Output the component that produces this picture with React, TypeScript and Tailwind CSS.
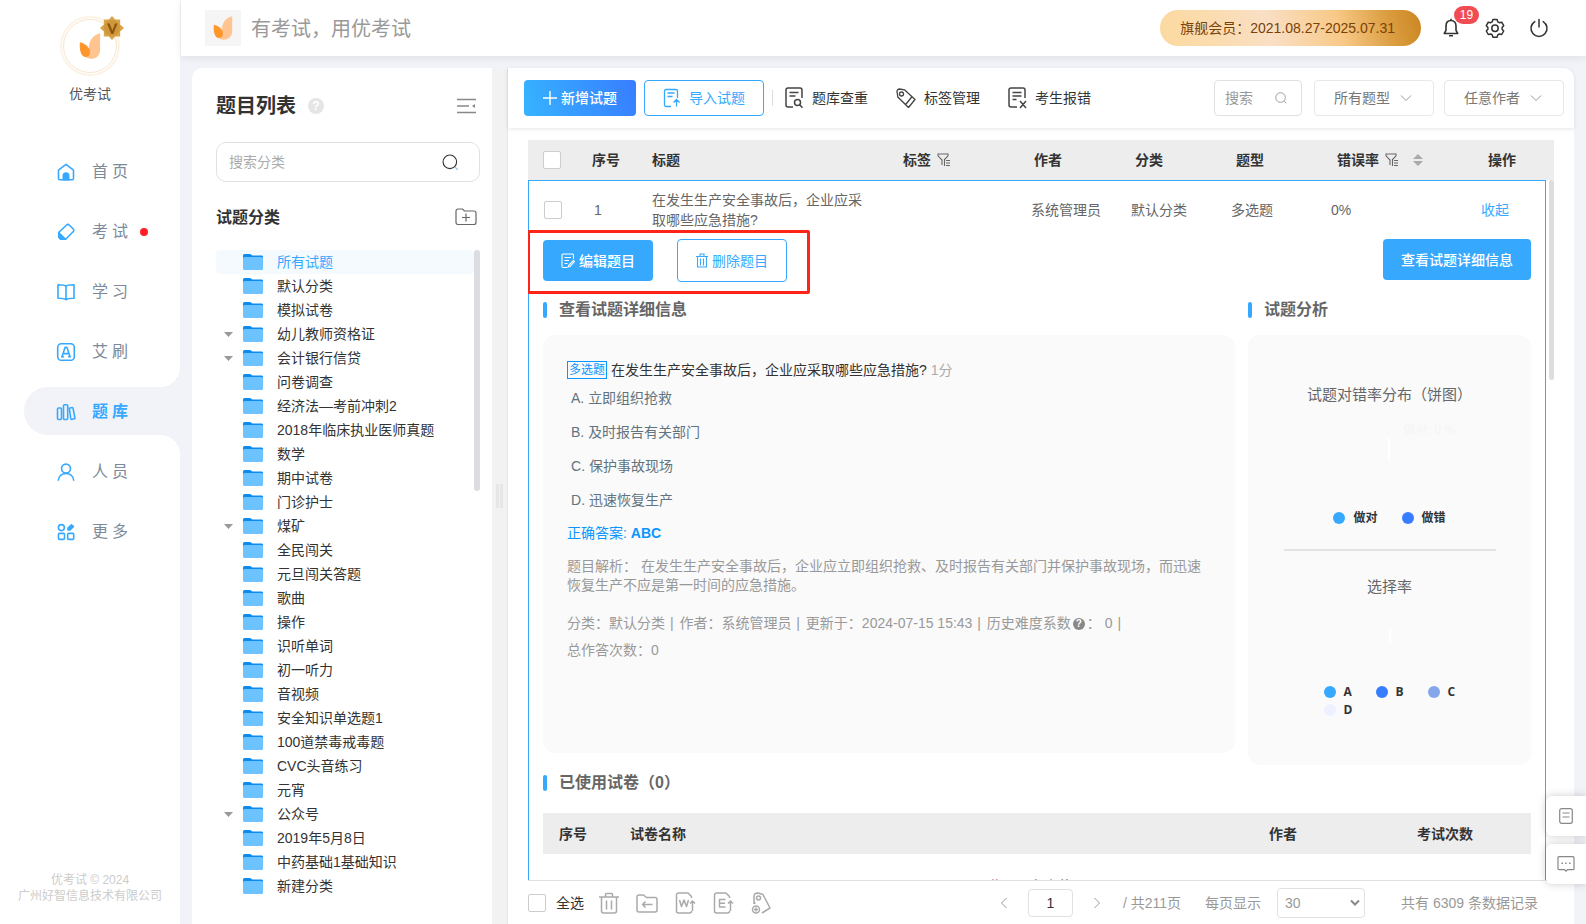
import React from "react";
import clsx from "clsx";

// Sidebar
const menu = [
  { name: "首页", icon: "home" },
  { name: "考试", icon: "exam", dot: true },
  { name: "学习", icon: "book" },
  { name: "艾刷", icon: "letter" },
  { name: "题库", icon: "bank", active: true },
  { name: "人员", icon: "user" },
  { name: "更多", icon: "more" },
];

// Categories of the tree
const categories = [
  { name: "所有试题", active: true },
  { name: "默认分类" },
  { name: "模拟试卷" },
  { name: "幼儿教师资格证", open: true },
  { name: "会计银行信贷", open: true },
  { name: "问卷调查" },
  { name: "经济法—考前冲刺2" },
  { name: "2018年临床执业医师真题" },
  { name: "数学" },
  { name: "期中试卷" },
  { name: "门诊护士" },
  { name: "煤矿", open: true },
  { name: "全民闯关" },
  { name: "元旦闯关答题" },
  { name: "歌曲" },
  { name: "操作" },
  { name: "识听单词" },
  { name: "初一听力" },
  { name: "音视频" },
  { name: "安全知识单选题1" },
  { name: "100道禁毒戒毒题" },
  { name: "CVC头音练习" },
  { name: "元宵" },
  { name: "公众号", open: true },
  { name: "2019年5月8日" },
  { name: "中药基础1基础知识" },
  { name: "新建分类" },
];

const options = [
  { key: "A", text: "立即组织抢救" },
  { key: "B", text: "及时报告有关部门" },
  { key: "C", text: "保护事故现场" },
  { key: "D", text: "迅速恢复生产" },
];

const choices = [
  { name: "A", color: "bg-[#36a9ff]" },
  { name: "B", color: "bg-[#387dff]" },
  { name: "C", color: "bg-[#85a7ea]" },
  { name: "D", color: "bg-[#edf1ff]" },
];

const MenuIcon = ({ name }: { name: string }) => (
  <svg
    className="size-5 shrink-0"
    viewBox="0 0 20 20"
    fill="none"
    stroke="#36a9ff"
    strokeWidth="1.6"
    strokeLinejoin="round"
  >
    {name === "home" && (
      <>
        <path d="M2.5 8.2 10 2.3l7.5 5.9v8.3a1.2 1.2 0 0 1-1.2 1.2H3.7a1.2 1.2 0 0 1-1.2-1.2z" />
        <path d="M7.3 17.7v-4a2.7 2.7 0 0 1 5.4 0v4z" fill="#36a9ff" />
      </>
    )}
    {name === "exam" && (
      <>
        <path d="m3 10.3 7.3-7.1a2.2 2.2 0 0 1 3.1 0l3.7 3.6a2 2 0 0 1 0 3L9.6 17.2H4.6L3 15.2z" />
        <path d="M2.7 10.6 9.5 17.2H4.800L2.700 15z" fill="#36a9ff" />
      </>
    )}
    {name === "book" && (
      <path d="M10 4.200c-1.200-1.400-3.600-1.400-8-1.400v13.400c4.400 0 6.800 0 8 1.500 1.200-1.500 3.600-1.500 8-1.500V2.800c-4.400 0-6.800 0-8 1.400zm0 0v13.400" />
    )}
    {name === "letter" && (
      <>
        <rect x="1.700" y="1.700" width="16.600" height="16.600" rx="3.600" />
        <path d="m6 14.800 3-9.400h2l3 9.400M7 11.600h6M5 14.800h3M12 14.800h3" />
      </>
    )}
    {name === "bank" && (
      <>
        <rect x="1.500" y="6" width="4" height="11.500" rx="1" />
        <rect x="7.500" y="2.800" width="4.200" height="14.700" rx="1" />
        <path d="m13.300 6.200 2.700-.7a.8.800 0 0 1 1 .6l2 10.400-3.300.900c-.5.100-.800-.100-.900-.500z" />
      </>
    )}
    {name === "user" && (
      <>
        <circle cx="10" cy="6.600" r="4.500" />
        <path d="M2.200 18.800c.4-4.600 3.600-7.300 7.800-7.300s7.400 2.700 7.800 7.300" />
      </>
    )}
    {name === "more" && (
      <>
        <circle cx="5.400" cy="5.600" r="3" />
        <rect x="2.500" y="11.400" width="6" height="6" rx="1" />
        <rect x="11.700" y="11.400" width="6" height="6" rx="1" />
        <path d="m12 6 3.400-3.200 2 1.900L14 7.900h-2z" fill="#36a9ff" />
      </>
    )}
  </svg>
);

const Logo = ({ className }: { className: string }) => (
  <svg className={className} viewBox="0 0 24 28">
    <path
      d="M23 0C15 2 11 8 11 15c0 5-3 8-5 10 2 2 4 3 7 3 6 0 10-4 10-10z"
      fill="#ffc48f"
    />
    <path d="M1 10c5 1 11 5 11 11 0 3-2 5-5 5C3 26 0 20 1 10z" fill="#ff962b" />
  </svg>
);

const Folder = () => (
  <svg className="h-4 w-5 shrink-0" viewBox="0 0 20 16">
    <path
      d="M0 1.500A1.500 1.500 0 0 1 1.500 0h5.300c1.300 0 1.700 1.500 3 1.500h9A1.200 1.200 0 0 1 20 2.700V8H0z"
      fill="#0b8cf2"
    />
    <path
      d="M0 4.200 1 3h18l1 1v10.500a1.500 1.500 0 0 1-1.500 1.500h-17A1.500 1.500 0 0 1 0 14.500z"
      fill="#6cc3ff"
    />
  </svg>
);

const Search = ({ className, handle }: { className: string; handle?: string }) => (
  <svg className={className} viewBox="0 0 18 18" fill="none" strokeWidth="1.200">
    <circle cx="8.300" cy="8.300" r="7.200" stroke="currentColor" />
    <path d="m13.800 13.800 3 3" stroke={handle || "currentColor"} />
  </svg>
);

const Chevron = ({ className }: { className: string }) => (
  <svg
    className={className}
    viewBox="0 0 12 12"
    fill="none"
    stroke="currentColor"
    strokeWidth="1"
  >
    <path d="m1 3.500 5 5 5-5" />
  </svg>
);

const Filter = () => (
  <svg
    className="size-[14px]"
    viewBox="0 0 14 14"
    fill="none"
    stroke="#666"
    strokeWidth="1.100"
  >
    <path d="M5 12V7L1 2.800V1h10v1.800L7.500 6.500V13M9 7.500h4M9 10h4M9 12.500h4" />
  </svg>
);

const Check = ({ label }: { label: string }) => (
  <input
    type="checkbox"
    aria-label={label}
    className="block size-[18px] shrink-0 appearance-none rounded-[2px] border border-[#ccc] bg-white"
  />
);

const SectionTitle = ({
  children,
  className,
}: {
  children: React.ReactNode;
  className: string;
}) => (
  <h2
    className={clsx(
      "flex items-center gap-3 text-base leading-4 font-bold text-[#666]",
      className
    )}
  >
    <span className="h-4 w-1 rounded-[2px] bg-[#36a9ff]" />
    {children}
  </h2>
);

const Sidebar = () => (
  <aside className="flex w-[180px] shrink-0 flex-col bg-white">
    {/* Avatar */}
    <div className="flex flex-col items-center pt-4">
      <div className="relative flex size-[60px] items-center justify-center rounded-full border-2 border-[#fcf3e4] bg-white">
        <div className="flex size-[54px] items-center justify-center rounded-full border border-[#f7e6cb]">
          <Logo className="h-[26px] w-[22px]" />
        </div>
        <svg className="absolute -top-[2px] -right-[6px] size-6" viewBox="0 0 24 24">
          <path
            d="m12 0 3.200 3.600 5-.1-.1 5L24 12l-3.900 3.500.1 5-5-.1L12 24l-3.200-3.600-5 .1.100-5L0 12l3.900-3.500-.1-5 5 .1z"
            fill="#d9a349"
          />
          <circle cx="12" cy="12" r="8" fill="#cf983c" />
          <path
            d="M7 7.500h2.600l2.800 7 2.600-7h2.500L13.300 18h-2z"
            fill="#8f560f"
          />
        </svg>
      </div>
      <p className="mt-2 text-sm text-[#555]">优考试</p>
    </div>

    {/* Menu */}
    <nav className="mt-[43px] flex flex-col gap-3">
      {menu.map((item) => (
        <a
          key={item.name}
          href="#"
          className={clsx(
            "relative ml-6 flex h-12 items-center rounded-l-full pt-px pl-8",
            item.active ? "bg-[#f1f3f8] text-[#36a9ff]" : "text-[#7c8a99]"
          )}
        >
          {item.active && (
            <>
              <span className="absolute -top-5 right-0 size-5 bg-[radial-gradient(circle_at_0_0,transparent_20px,#f1f3f8_20px)]" />
              <span className="absolute right-0 -bottom-5 size-5 bg-[radial-gradient(circle_at_0_100%,transparent_20px,#f1f3f8_20px)]" />
            </>
          )}
          <MenuIcon name={item.icon} />
          <span
            className={clsx(
              "ml-4 flex gap-1 text-base",
              item.active && "font-bold"
            )}
          >
            {[...item.name].map((char) => (
              <span key={char}>{char}</span>
            ))}
          </span>
          {item.dot && <span className="ml-3 size-2 rounded-full bg-[#ff1f28]" />}
        </a>
      ))}
    </nav>

    <p className="mt-auto pb-5 text-center text-xs leading-4 text-[#ccc]">
      优考试 © 2024
      <br />
      广州好智信息技术有限公司
    </p>
  </aside>
);

const Header = () => (
  <header className="relative z-10 ml-px flex h-14 shrink-0 items-center bg-white pr-[37px] pl-6 shadow-[0_2px_8px_rgba(0,0,40,0.08)]">
    <div className="flex size-9 items-center justify-center bg-[#f5f5f5]">
      <Logo className="h-6 w-5" />
    </div>
    <p className="ml-[10px] pt-[2px] text-xl text-[#999]">有考试，用优考试</p>

    <div className="ml-auto flex h-9 items-center rounded-full bg-[linear-gradient(75deg,#fbd9a0_0%,#fbdcae_20%,#f9dfc5_42%,#f8c987_68%,#dc9f43_86%,#cb8520_100%)] px-5 text-sm whitespace-nowrap text-[#7a4108]">
      旗舰会员：
      <span className="mr-[6px]">2021.08.27-2025.07.31</span>
    </div>
    <button aria-label="消息" className="relative ml-5">
      <svg
        className="size-5"
        viewBox="0 0 20 20"
        fill="none"
        stroke="#333"
        strokeWidth="1.600"
        strokeLinejoin="round"
      >
        <path d="M10 2.500c-3.200 0-5 2.400-5 5.500v4.300L3.300 15.500h13.400L15 12.300V8c0-3.100-1.800-5.500-5-5.500zM10 .8v1.700M8 17.800h4" />
      </svg>
      <span className="absolute -top-3 left-[13px] flex h-[18px] w-[25px] items-center justify-center rounded-full bg-[#f14c54] text-xs text-white">
        19
      </span>
    </button>
    <button aria-label="设置" className="ml-6">
      <svg
        className="size-5"
        viewBox="0 0 20 20"
        fill="none"
        stroke="#333"
        strokeWidth="1.500"
        strokeLinejoin="round"
      >
        <path d="M8 1.500h4l.8 2.300 1.500.9 2.400-.5 2 3.500-1.600 1.800v1.700l1.600 1.800-2 3.500-2.400-.5-1.500.9-.8 2.300H8l-.8-2.300-1.500-.9-2.400.5-2-3.500 1.600-1.800V9.500L1.300 7.700l2-3.500 2.400.5 1.500-.9z" />
        <circle cx="10" cy="10.300" r="3.200" />
      </svg>
    </button>
    <button aria-label="退出" className="ml-6">
      <svg
        className="size-5"
        viewBox="0 0 20 20"
        fill="none"
        stroke="#333"
        strokeWidth="1.500"
        strokeLinecap="round"
      >
        <path d="M10 1.500v7.500M5.800 3.600a8 8 0 1 0 8.400 0" />
      </svg>
    </button>
  </header>
);

const CategoryPanel = () => (
  <section className="w-[300px] shrink-0 overflow-hidden rounded-tl-[10px] bg-white pr-3 pl-6">
    <div className="flex items-center pt-6 pr-1">
      <h1 className="text-xl font-bold text-[#333]">题目列表</h1>
      <span className="ml-3 flex size-4 items-center justify-center rounded-full bg-[#e5e5e5] text-xs font-bold text-white">
        ?
      </span>
      <button aria-label="收起列表" className="ml-auto">
        <svg className="h-4 w-[19px]" viewBox="0 0 19 16" stroke="#888" strokeWidth="1.300">
          <path d="M0 1.500h19M0 8h12M0 14.500h19" />
          <path d="m18 6-3 2 3 2z" fill="#888" stroke="none" />
        </svg>
      </button>
    </div>

    <div className="mt-[22px] flex h-10 items-center rounded-[10px] border border-[#e1e1e1] px-3">
      <input
        aria-label="搜索分类"
        placeholder="搜索分类"
        className="min-w-0 flex-1 text-sm outline-none placeholder:text-[#aaa]"
      />
      <Search className="mr-2 size-[17px] text-[#333]" handle="#6cc3ff" />
    </div>

    <div className="mt-6 flex h-6 items-start pr-[3px]">
      <h2 className="text-base font-bold text-[#333]">试题分类</h2>
      <button aria-label="新建分类" className="mt-[2px] ml-auto">
        <svg
          className="h-[17px] w-[22px]"
          viewBox="0 0 22 17"
          fill="none"
          stroke="#666"
          strokeWidth="1.200"
        >
          <path d="M1 3a2 2 0 0 1 2-2h4.500l2 2H19a2 2 0 0 1 2 2v9.500a2 2 0 0 1-2 2H3a2 2 0 0 1-2-2z" />
          <path d="M11 5.500v8M7 9.500h8" />
        </svg>
      </button>
    </div>

    {/* Tree */}
    <div className="mt-5 flex items-start">
      <ul className="flex-1">
        {categories.map((category) => (
          <li
            key={category.name}
            className={clsx(
              "flex h-6 items-center rounded pl-2 text-sm",
              category.active ? "bg-[#f5faff] text-[#36a9ff]" : "text-[#333]"
            )}
          >
            <svg className="mr-[10px] h-[5px] w-[9px]" viewBox="0 0 9 5">
              {category.open && <path d="M0 0h9L4.500 5z" fill="#999" />}
            </svg>
            <Folder />
            <span className="ml-[14px] whitespace-nowrap">{category.name}</span>
          </li>
        ))}
      </ul>
      <div className="h-[241px] w-[6px] rounded-full bg-[#dcdde0]" />
    </div>
  </section>
);

const toolLink = "flex items-center gap-2 text-sm text-[#333] whitespace-nowrap";

const SelectBox = ({ label }: { label: string }) => (
  <div className="relative">
    <select
      aria-label={label}
      className="h-9 w-[120px] appearance-none rounded border border-[#e8e8e8] bg-white pl-[19px] text-sm text-[#777]"
    >
      <option>{label}</option>
    </select>
    <Chevron className="pointer-events-none absolute top-3 right-[22px] size-3 text-[#999]" />
  </div>
);

const Toolbar = () => (
  <div className="flex h-[60px] shrink-0 items-center rounded-tr-[10px] pr-[10px] pl-4 shadow-[0_1px_4px_rgba(0,0,0,0.1)]">
    <button className="flex h-9 w-28 items-center justify-center gap-1 rounded bg-[linear-gradient(75deg,#36b4ff,#387dff)] text-sm font-medium text-white">
      <svg className="size-[14px]" viewBox="0 0 14 14" stroke="#fff" strokeWidth="1.400">
        <path d="M7 0v14M0 7h14" />
      </svg>
      新增试题
    </button>
    <button className="ml-2 flex h-9 w-[120px] items-center justify-center gap-2 rounded border border-[#36a9ff] text-sm text-[#36a9ff]">
      <svg
        className="h-5 w-[18px]"
        viewBox="0 0 18 20"
        fill="none"
        stroke="#36a9ff"
        strokeWidth="1.300"
      >
        <path d="M8 18.500H3a1.500 1.500 0 0 1-1.500-1.500V3A1.500 1.500 0 0 1 3 1.500h10A1.500 1.500 0 0 1 14.500 3v7M4.500 5h7M4.500 8.500h5M13.500 18.500v-6.500M10.500 14.500l3-3 3 3" />
      </svg>
      导入试题
    </button>
    <span className="ml-2 h-4 w-px bg-[#ddd]" />
    <div className="ml-3 flex gap-7">
      <button className={toolLink}>
        <svg
          className="h-[22px] w-[19px]"
          viewBox="0 0 19 22"
          fill="none"
          stroke="#444"
          strokeWidth="1.500"
        >
          <path d="M8 20H3a2 2 0 0 1-2-2V3a2 2 0 0 1 2-2h12a2 2 0 0 1 2 2v8M4.500 5.500h9M4.500 9h6" />
          <circle cx="12.500" cy="15.500" r="3" />
          <path d="m14.700 17.800 2.800 3" />
        </svg>
        题库查重
      </button>
      <button className={toolLink}>
        <svg
          className="size-5"
          viewBox="0 0 20 20"
          fill="none"
          stroke="#444"
          strokeWidth="1.300"
          strokeLinejoin="round"
        >
          <path d="M1 3.500c0-1.500 1-2.500 2.500-2.500l5 .8L19 11.500l-6.500 8L1.800 9zM15.700 9l-6 7.500" />
          <circle cx="5.500" cy="6" r="2" />
        </svg>
        标签管理
      </button>
      <button className={toolLink}>
        <svg
          className="h-[22px] w-[19px]"
          viewBox="0 0 19 22"
          fill="none"
          stroke="#444"
          strokeWidth="1.500"
        >
          <path d="M9 20H3a2 2 0 0 1-2-2V3a2 2 0 0 1 2-2h12a2 2 0 0 1 2 2v8M4.500 5.500h9M4.500 9h9M4.500 12.500h4M12 14l6 7M18 14l-6 7" />
        </svg>
        考生报错
      </button>
    </div>

    <div className="ml-auto flex gap-3">
      <div className="flex h-9 w-[88px] items-center rounded border border-[#e1e1e1] pr-[14px] pl-[10px]">
        <input
          aria-label="搜索"
          placeholder="搜索"
          className="w-0 min-w-0 flex-1 text-sm outline-none placeholder:text-[#999]"
        />
        <Search className="size-3 text-[#888]" />
      </div>
      <div className="flex gap-[10px]">
        <SelectBox label="所有题型" />
        <SelectBox label="任意作者" />
      </div>
    </div>
  </div>
);

const Legend = ({ color, name }: { color: string; name: string }) => (
  <li className="flex items-center gap-2">
    <span className={clsx("size-3 rounded-full", color)} />
    {name}
  </li>
);

const Divider = () => <span className="mr-[2px] ml-px">|</span>;

const Detail = () => (
  <div className="px-[14px]">
    {/* Actions */}
    <div className="relative flex h-[43px] items-start">
      <button className="flex h-[41px] w-[110px] items-center justify-center gap-1 self-center rounded bg-[#36a9ff] text-sm font-medium text-white">
        <svg
          className="h-4 w-[14px]"
          viewBox="0 0 14 16"
          fill="none"
          stroke="#fff"
          strokeWidth="1.100"
        >
          <path d="M6 14.500H2a1 1 0 0 1-1-1V2a1 1 0 0 1 1-1h9.500a1 1 0 0 1 1 1v4M3.500 4.500H10M3.500 7.500H8M3.500 10.500h3M8 12l4.500-4.500 1 1L9 13.500l-2 .5z" />
        </svg>
        编辑题目
      </button>
      <button className="ml-6 flex h-[43px] w-[110px] items-center justify-center gap-1 rounded border border-[#36a9ff] text-sm text-[#36a9ff]">
        <svg
          className="h-[15px] w-3"
          viewBox="0 0 12 15"
          fill="none"
          stroke="#36a9ff"
          strokeWidth="1.100"
        >
          <path d="M0 3.500h12M4 3V1h4v2M1.500 3.500v10.500h9V3.500M4.500 5.500v7M7.500 5.500v7" />
        </svg>
        删除题目
      </button>
      <button className="ml-auto h-[41px] w-[148px] rounded bg-[#36a9ff] text-sm font-medium text-white">
        查看试题详细信息
      </button>
      <div className="pointer-events-none absolute -top-[9px] -left-4 h-16 w-[283px] rounded-[2px] border-3 border-[#ff2418]" />
    </div>

    <div className="flex items-start gap-[13px]">
      <div className="flex-1">
        <SectionTitle className="h-[53px] pt-[2px]">查看试题详细信息</SectionTitle>
        <div className="min-h-[418px] rounded-xl bg-[#fafafa] p-6 text-sm">
          <p className="flex items-center leading-[22px] text-[#333]">
            <span className="mr-1 border border-[#0a95ff] px-px text-xs leading-4 text-[#0a95ff]">
              多选题
            </span>
            在发生生产安全事故后，企业应采取哪些应急措施?
            <span className="ml-1 text-[#aaa]">1分</span>
          </p>
          <ul className="pl-1 leading-[34px] text-[#5f7480]">
            {options.map((option) => (
              <li key={option.key}>
                {option.key}. {option.text}
              </li>
            ))}
          </ul>
          <p className="leading-8 text-[#0a95ff]">
            正确答案: <strong>ABC</strong>
          </p>
          <p className="mt-2 leading-[19px] text-[#999]">
            题目解析： 在发生生产安全事故后，企业应立即组织抢救、及时报告有关部门并保护事故现场，而迅速恢复生产不应是第一时间的应急措施。
          </p>
          <p className="mt-[15px] leading-[27px] text-[#999]">
            分类：默认分类 <Divider /> 作者：系统管理员 <Divider />{" "}
            更新于：2024-07-15 15:43 <Divider /> 历史难度系数
            <span className="mx-[2px] inline-flex size-3 items-center justify-center rounded-full bg-[#888] align-[1px] text-[10px] leading-3 font-bold text-white">
              ?
            </span>
            ： 0 <Divider /> <span className="inline-block">总作答次数：0</span>
          </p>
        </div>
      </div>

      <div className="w-[283px] shrink-0">
        <SectionTitle className="h-[53px] pt-[2px]">试题分析</SectionTitle>
        <div className="flex h-[430px] flex-col items-center rounded-xl bg-[#fafafa] pt-[50px]">
          <h3 className="text-[15px] leading-5 text-[#666]">试题对错率分布（饼图）</h3>
          <div className="flex h-[104px] items-start pt-[17px] pl-16 text-xs text-[#f5f5f5]">
            <span className="mt-4 mr-[14px] h-6 w-[2px] bg-white" />
            做对: 0 %
          </div>
          <ul className="flex gap-6 text-xs leading-[18px] font-bold text-[#333]">
            <Legend color="bg-[#36a9ff]" name="做对" />
            <Legend color="bg-[#387dff]" name="做错" />
          </ul>
          <hr className="mt-[22px] w-[212px] border-t-2 border-[#e3e3e3]" />
          <h3 className="mt-[26px] text-[15px] leading-5 text-[#666]">选择率</h3>
          <span className="mt-8 mb-10 h-[14px] w-[2px] bg-white" />
          <ul className="ml-6 grid w-[156px] grid-cols-3 font-['Open_Sans',sans-serif] text-xs leading-[18px] font-bold text-[#333]">
            {choices.map((choice) => (
              <Legend key={choice.name} color={choice.color} name={choice.name} />
            ))}
          </ul>
        </div>
      </div>
    </div>

    {/* Papers */}
    <SectionTitle className="h-12 pb-3">已使用试卷（0）</SectionTitle>
    <table className="w-full table-fixed text-left text-sm">
      <thead className="bg-[#ededed] text-[#333]">
        <tr className="h-[41px] *:pl-4 *:font-bold">
          <th className="w-[71px]">序号</th>
          <th>试卷名称</th>
          <th className="w-[148px]">作者</th>
          <th className="w-[130px]">考试次数</th>
        </tr>
      </thead>
      <tbody>
        <tr>
          <td colSpan={4} className="h-16 text-center text-[#666]">
            此题现在未使用
          </td>
        </tr>
      </tbody>
    </table>
  </div>
);

const QuestionTable = () => (
  <div className="flex min-h-0 flex-1 flex-col px-5 pt-3">
    <table className="w-full shrink-0 table-fixed text-left text-sm text-[#333]">
      <thead className="bg-[#ededed]">
        <tr className="h-10 *:pl-[10px] *:font-bold">
          <th className="w-[54px] pl-[15px]!">
            <Check label="选择全部" />
          </th>
          <th className="w-[60px]">序号</th>
          <th>标题</th>
          <th className="w-[131px]">
            <span className="flex items-center gap-[6px]">
              标签 <Filter />
            </span>
          </th>
          <th className="w-[101px]">作者</th>
          <th className="w-[101px]">分类</th>
          <th className="w-[101px]">题型</th>
          <th className="w-[151px]">
            <span className="flex items-center gap-[6px]">
              错误率 <Filter />
              <svg className="ml-2 h-3 w-[10px]" viewBox="0 0 10 12" fill="#aaa">
                <path d="M0 5h10L5 0zM0 7h10l-5 5z" />
              </svg>
            </span>
          </th>
          <th className="w-[76px]">操作</th>
        </tr>
      </thead>
    </table>

    <div className="flex min-h-0 flex-1 items-start overflow-hidden">
      <div className="flex-1 border border-[#36a9ff]">
        <table className="w-full table-fixed text-sm text-[#666]">
          <tbody>
            <tr className="h-[58px] *:pl-[10px]">
              <td className="w-[53px] pl-[15px]!">
                <Check label="选择试题 1" />
              </td>
              <td className="w-[60px] pl-3!">1</td>
              <td className="w-[235px] pr-[10px]">
                在发生生产安全事故后，企业应采取哪些应急措施?
              </td>
              <td />
              <td className="w-[100px]">系统管理员</td>
              <td className="w-[100px]">默认分类</td>
              <td className="w-[100px]">多选题</td>
              <td className="w-[150px]">0%</td>
              <td className="w-[74px]">
                <button className="text-[#36a9ff]">收起</button>
              </td>
            </tr>
            <tr>
              <td colSpan={9}>
                <Detail />
              </td>
            </tr>
          </tbody>
        </table>
      </div>
      <div className="ml-[3px] h-[200px] w-[5px] rounded-full bg-[#dcdde0]" />
    </div>
  </div>
);

const FooterIcon = ({ label, children }: { label: string; children: React.ReactNode }) => (
  <button aria-label={label}>
    <svg
      className="size-[22px]"
      viewBox="0 0 22 22"
      fill="none"
      stroke="#aaa"
      strokeWidth="1.500"
      strokeLinejoin="round"
    >
      {children}
    </svg>
  </button>
);

const Footer = () => (
  <footer className="ml-5 flex h-11 shrink-0 items-center border-t border-[#e1e1e1] pr-9 text-sm whitespace-nowrap text-[#999]">
    <label className="flex items-center gap-[10px] text-[#333]">
      <Check label="全选" />
      全选
    </label>
    <div className="ml-[14px] flex gap-4">
      <FooterIcon label="删除">
        <path d="M1 5h20M7.500 5V2.500A1 1 0 0 1 8.500 1.500h5a1 1 0 0 1 1 1V5M3.500 5v14a2 2 0 0 0 2 2h11a2 2 0 0 0 2-2V5M8.500 8.500v9M13.500 8.500v9" />
      </FooterIcon>
      <FooterIcon label="移动">
        <path d="M1 5a2 2 0 0 1 2-2h4.500l3 2.500H19a2 2 0 0 1 2 2V18a2 2 0 0 1-2 2H3a2 2 0 0 1-2-2zM6.500 12.500h10M9.500 9.500l-3 3 3 3" />
      </FooterIcon>
      <FooterIcon label="导出 Word">
        <path d="M17.500 19a2 2 0 0 1-2 2h-11a2 2 0 0 1-2-2V3a2 2 0 0 1 2-2H14l3.500 3.500V6M18.500 19V9M16 11.500 18.500 9l2.500 2.500" />
        <path d="m5.500 8 2 6.500L10 8l2.500 6.500 2-6.500" />
      </FooterIcon>
      <FooterIcon label="导出 Excel">
        <path d="M17.500 19a2 2 0 0 1-2 2h-11a2 2 0 0 1-2-2V3a2 2 0 0 1 2-2H14l3.500 3.500V6M18.500 19V9M16 11.500 18.500 9l2.500 2.500" />
        <path d="M13.500 7.500h-6v7.500h6M7.500 11.200H13" />
      </FooterIcon>
      <FooterIcon label="设置标签">
        <path d="M4 12V4.500C4 2 6 1 8 1l5 1.500 7 13.500-8 5M4 9l1 3" />
        <circle cx="8.500" cy="6" r="2" />
        <circle cx="6" cy="17.500" r="3.500" />
        <path d="M6 15.500v4M4 17.500h4" />
      </FooterIcon>
    </div>

    <button aria-label="上一页" className="ml-auto">
      <Chevron className="size-3 rotate-90" />
    </button>
    <input
      aria-label="页码"
      defaultValue="1"
      className="ml-[18px] h-7 w-[45px] rounded border border-[#e1e1e1] text-center text-[#333]"
    />
    <button aria-label="下一页" className="ml-[18px]">
      <Chevron className="size-3 -rotate-90" />
    </button>
    <span className="ml-5">/ 共211页</span>
    <label className="ml-6 flex items-center gap-4">
      每页显示
      <span className="relative">
        <select className="block h-[30px] w-[88px] appearance-none rounded border border-[#e1e1e1] bg-white pl-[7px]">
          <option>30</option>
        </select>
        <svg
          className="pointer-events-none absolute top-[11px] right-[5px] h-2 w-[10px]"
          viewBox="0 0 10 8"
          fill="none"
          stroke="#888"
          strokeWidth="2"
        >
          <path d="m1 1.500 4 4 4-4" />
        </svg>
      </span>
    </label>
    <span className="ml-9">共有 6309 条数据记录</span>
  </footer>
);

const floating =
  "flex h-10 w-10 items-center justify-center rounded-l-md bg-white shadow-[0_0_8px_rgba(0,0,0,0.2)]";

export default function App() {
  return (
    <div className="flex h-screen overflow-hidden bg-[#f1f3f8] font-['Liberation_Sans','Noto_Sans_CJK_SC',sans-serif]">
      <Sidebar />

      <div className="flex min-w-0 flex-1 flex-col">
        <Header />
        <main className="flex min-h-0 flex-1 px-3 pt-3">
          <CategoryPanel />

          {/* Splitter */}
          <div className="flex w-[15px] shrink-0 items-center justify-center gap-px bg-[#f2f2f2]">
            <span className="h-6 w-[3px] bg-[#e6e6e6]" />
            <span className="h-6 w-[3px] bg-[#e6e6e6]" />
          </div>

          <section className="flex min-w-0 flex-1 flex-col rounded-tr-[10px] border-l border-[#e6e6e6] bg-white">
            <Toolbar />
            <QuestionTable />
            <Footer />
          </section>
        </main>
      </div>

      {/* Floating buttons */}
      <div className="fixed right-0 bottom-10 z-20 flex flex-col gap-2">
        <button aria-label="文档" className={floating}>
          <svg
            className="h-4 w-[14px]"
            viewBox="0 0 14 16"
            fill="none"
            stroke="#888"
            strokeWidth="1.200"
          >
            <rect x=".7" y=".7" width="12.600" height="14.600" rx="2" />
            <path d="M3.500 5h7M3.500 9h7" />
          </svg>
        </button>
        <button aria-label="客服" className={floating}>
          <svg
            className="h-4 w-[18px]"
            viewBox="0 0 18 16"
            fill="none"
            stroke="#888"
            strokeWidth="1.200"
          >
            <path d="M2 .7h14a1 1 0 0 1 1 1v11a1 1 0 0 1-1 1h-5.500L9 15.200l-1.500-1.500H2a1 1 0 0 1-1-1v-11a1 1 0 0 1 1-1z" />
            <path d="M4.500 7.200h1.500M8.200 7.200h1.500M12 7.200h1.500" strokeWidth="1.600" />
          </svg>
        </button>
      </div>
    </div>
  );
}
